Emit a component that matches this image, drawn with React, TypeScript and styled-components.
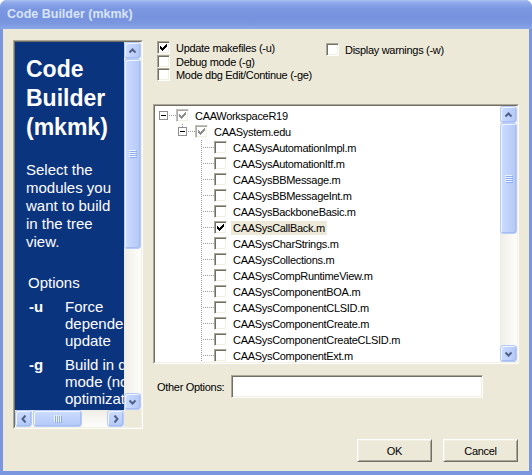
import React from "react";
import styled, { createGlobalStyle, css } from "styled-components";

const GlobalStyle = createGlobalStyle`
  html, body {
    margin: 0;
    padding: 0;
    background: #ffffff;
  }
  #root {
    width: 532px;
    height: 475px;
  }
`;

// classic 3d edges, XP colour scheme
const sunkenOuter = css`
  border: 1px solid;
  border-color: #aca899 #ffffff #ffffff #aca899;
`;

const sunkenInner = css`
  border: 1px solid;
  border-color: #716f64 #f1efe2 #f1efe2 #716f64;
`;

const Window = styled.div`
  width: 532px;
  height: 475px;
  display: flex;
  flex-direction: column;
  background: #7a96df;
  border-radius: 7px 7px 0 0;
  overflow: hidden;
`;

const TitleBar = styled.div`
  flex: none;
  height: 29px;
  box-sizing: border-box;
  display: flex;
  align-items: center;
  padding: 0 0 1px 7px;
  background: linear-gradient(
    180deg,
    #a9c0f2 0%,
    #8ea9ea 10%,
    #7c98e1 28%,
    #7793df 60%,
    #7b97e0 82%,
    #8ba7ea 100%
  );
  color: #d8e4f8;
  font: bold 12.5px "Liberation Sans", Arial, sans-serif;
`;

const Client = styled.div`
  flex: 1;
  margin: 0 3px 4px 3px;
  background: #ece9d8;
  display: grid;
  grid-template-columns: 130px 366px;
  grid-template-rows: 389px 23px;
  column-gap: 10px;
  row-gap: 10px;
  align-content: start;
  padding: 11px 0 0 10px;
  font-family: "Liberation Sans", Arial, sans-serif;
  font-size: 11px;
  letter-spacing: -0.3px;
  color: #000;
`;

/* ---------- scrollbars ---------- */

type Dir = "v" | "h";

const Track = styled.div<{ $dir: Dir }>`
  display: flex;
  flex-direction: ${(p) => (p.$dir === "v" ? "column" : "row")};
  min-width: 0;
  min-height: 0;
  background: linear-gradient(
    ${(p) => (p.$dir === "v" ? "90deg" : "180deg")},
    #eeede5 0%,
    #f5f4ef 40%,
    #fdfdfb 100%
  );
`;

const piece = css<{ $dir: Dir }>`
  box-sizing: border-box;
  border: 1px solid #b6cbf7;
  border-radius: 3px;
  background: linear-gradient(
    ${(p) => (p.$dir === "v" ? "90deg" : "180deg")},
    #cddcfe 0%,
    #bfd2fb 50%,
    #b3c9f7 100%
  );
  box-shadow: inset 1px 1px 0 #f1f5fe, inset -1px -1px 0 #a7bdf0;
  display: flex;
  align-items: center;
  justify-content: center;
`;

const ArrowButton = styled.div<{ $dir: Dir }>`
  ${piece};
  flex: none;
  width: 17px;
  height: 17px;
`;

const Thumb = styled.div<{ $dir: Dir; $size: number; $lead: number }>`
  ${piece};
  flex: none;
  ${(p) =>
    p.$dir === "v"
      ? `height: ${p.$size}px; margin-top: ${p.$lead}px;`
      : `width: ${p.$size}px; margin-left: ${p.$lead}px;`}
`;

const Spacer = styled.div`
  flex: 1;
`;

const arrowPaths: Record<string, string> = {
  up: "M1.5 5.5 L4.5 2.5 L7.5 5.5",
  down: "M1.5 2.5 L4.5 5.5 L7.5 2.5",
  left: "M5.5 0.5 L2.5 4 L5.5 7.5",
  right: "M2.5 0.5 L5.5 4 L2.5 7.5",
};

function Arrow({ to }: { to: "up" | "down" | "left" | "right" }) {
  const vertical = to === "up" || to === "down";
  return (
    <svg width={vertical ? 9 : 8} height={vertical ? 8 : 8} viewBox={vertical ? "0 0 9 8" : "0 0 8 8"}>
      <path d={arrowPaths[to]} fill="none" stroke="#4d6185" strokeWidth={2} />
    </svg>
  );
}

function Grip({ dir }: { dir: Dir }) {
  const bars = [0, 2, 4, 6];
  return (
    <svg width="8" height="8" shapeRendering="crispEdges">
      {bars.map((o) =>
        dir === "v" ? (
          <g key={o}>
            <rect x={0} y={o} width={7} height={1} fill="#eef4fe" />
            <rect x={1} y={o + 1} width={7} height={1} fill="#8cabf0" />
          </g>
        ) : (
          <g key={o}>
            <rect x={o} y={0} width={1} height={7} fill="#eef4fe" />
            <rect x={o + 1} y={1} width={1} height={7} fill="#8cabf0" />
          </g>
        )
      )}
    </svg>
  );
}

function ScrollBar({ dir, thumb, lead = 0 }: { dir: Dir; thumb: number; lead?: number }) {
  return (
    <Track $dir={dir}>
      <ArrowButton $dir={dir}>
        <Arrow to={dir === "v" ? "up" : "left"} />
      </ArrowButton>
      <Thumb $dir={dir} $size={thumb} $lead={lead}>
        <Grip dir={dir} />
      </Thumb>
      <Spacer />
      <ArrowButton $dir={dir}>
        <Arrow to={dir === "v" ? "down" : "right"} />
      </ArrowButton>
    </Track>
  );
}

/* ---------- help pane ---------- */

const HelpFrame = styled.div`
  ${sunkenOuter};
  grid-column: 1;
  grid-row: 1;
`;

const HelpWell = styled.div`
  ${sunkenInner};
  height: 100%;
  box-sizing: border-box;
  display: grid;
  grid-template-columns: 109px 17px;
  grid-template-rows: 368px 17px;
`;

const HelpContent = styled.div`
  min-width: 0;
  overflow: hidden;
  background: #0b347f;
  color: #ffffff;
  padding: 13px 0 0 11px;
  letter-spacing: normal;
  font-family: "Liberation Sans", Arial, sans-serif;
`;

const HelpTitle = styled.h1`
  margin: 0;
  font-size: 23px;
  line-height: 29px;
  font-weight: bold;
`;

const HelpText = styled.p`
  margin: 19px 0 0 0;
  padding-right: 4px;
  font-size: 15px;
  line-height: 18px;
`;

const HelpSection = styled.div`
  margin: 23px 0 0 2px;
  font-size: 15px;
  line-height: 18px;
`;

const FlagList = styled.div`
  display: grid;
  grid-template-columns: 36px 100px;
  row-gap: 7px;
  margin: 3px 0 0 3px;
  padding-top: 3px;
  font-size: 15px;
  line-height: 17px;
`;

const Flag = styled.div`
  font-weight: bold;
`;

const FlagDesc = styled.div``;

const Corner = styled.div`
  background: #ece9d8;
`;

/* ---------- checkboxes ---------- */

const Box = styled.span<{ $greyed?: boolean }>`
  flex: none;
  width: 13px;
  height: 13px;
  box-sizing: border-box;
  border: 1px solid;
  border-color: ${(p) => (p.$greyed ? "#c4c2b8 #ffffff #ffffff #c4c2b8" : "#aca899 #ffffff #ffffff #aca899")};
  box-shadow: ${(p) =>
    p.$greyed ? "inset 1px 1px 0 #a8a8a8, inset -1px -1px 0 #f1efe2" : "inset 1px 1px 0 #716f64, inset -1px -1px 0 #f1efe2"};
  background: #ffffff;
  display: flex;
  align-items: center;
  justify-content: center;
`;

const tick =
  "M6 0h1v1h-1z M5 1h2v1h-2z M0 2h1v1h-1z M4 2h3v1h-3z M0 3h2v1h-2z M3 3h3v1h-3z M0 4h5v1h-5z M1 5h3v1h-3z M2 6h1v1h-1z";

function CheckBox({ checked, greyed }: { checked?: boolean; greyed?: boolean }) {
  return (
    <Box $greyed={greyed}>
      {checked && (
        <svg width="7" height="7" shapeRendering="crispEdges">
          <path d={tick} fill={greyed ? "#8e8e8e" : "#000000"} />
        </svg>
      )}
    </Box>
  );
}

const OptionsBlock = styled.div`
  display: flex;
  margin-top: 1px;
  padding-left: 4px;
`;

const CheckColumn = styled.div<{ $width?: number; $drop?: number }>`
  display: flex;
  flex-direction: column;
  ${(p) => (p.$width ? `width: ${p.$width}px;` : "")}
  padding-top: ${(p) => p.$drop ?? 0}px;
`;

const CheckItem = styled.label`
  display: flex;
  align-items: center;
  height: 13px;
  gap: 6px;
  white-space: nowrap;

  &:first-child {
    margin-bottom: 1px;
  }
`;

/* ---------- tree ---------- */

const MainCol = styled.div`
  grid-column: 2;
  grid-row: 1;
  display: flex;
  flex-direction: column;
`;

const TreeFrame = styled.div`
  ${sunkenOuter};
  margin-top: 23px;
  height: 260px;
  box-sizing: border-box;
`;

const TreeWell = styled.div`
  ${sunkenInner};
  height: 100%;
  box-sizing: border-box;
  display: flex;
  background: #ffffff;
`;

const TreeBody = styled.div`
  flex: 1;
  min-width: 0;
  overflow: hidden;
  padding-top: 2px;
`;

const TreeScroll = styled.div`
  flex: none;
  width: 17px;
  display: flex;

  & > div {
    flex: 1;
  }
`;

const TreeRow = styled.div<{ $level: number }>`
  display: flex;
  align-items: flex-start;
  height: 16px;
  padding-left: ${(p) => 3 + p.$level * 19}px;

  & > ${Box} {
    margin-top: 1px;
  }
`;

const TreeLabel = styled.span<{ $selected?: boolean }>`
  margin: 1px 0 0 4px;
  padding: 0 2px;
  line-height: 14px;
  white-space: nowrap;
  background: ${(p) => (p.$selected ? "#ece9d8" : "transparent")};
`;

type BranchKind = "root" | "open" | "leaf";

function Branch({ kind }: { kind: BranchKind }) {
  const line = { stroke: "#9a9a9a", strokeDasharray: "1 1", strokeWidth: 1 };
  return (
    <svg width="18" height="16" shapeRendering="crispEdges" style={{ flex: "none" }}>
      {kind === "leaf" ? (
        <>
          <line x1={5.5} y1={0} x2={5.5} y2={16} {...line} />
          <line x1={7} y1={7.5} x2={18} y2={7.5} {...line} />
        </>
      ) : (
        <>
          {kind === "open" && <line x1={5.5} y1={0} x2={5.5} y2={3} {...line} />}
          <rect x={1.5} y={3.5} width={8} height={8} fill="#ffffff" stroke="#8e8e8e" />
          <line x1={3} y1={7.5} x2={8} y2={7.5} stroke="#000000" />
          <line x1={11} y1={7.5} x2={18} y2={7.5} {...line} />
        </>
      )}
    </svg>
  );
}

const modules = [
  "CAASysAutomationImpl.m",
  "CAASysAutomationItf.m",
  "CAASysBBMessage.m",
  "CAASysBBMessageInt.m",
  "CAASysBackboneBasic.m",
  "CAASysCallBack.m",
  "CAASysCharStrings.m",
  "CAASysCollections.m",
  "CAASysCompRuntimeView.m",
  "CAASysComponentBOA.m",
  "CAASysComponentCLSID.m",
  "CAASysComponentCreate.m",
  "CAASysComponentCreateCLSID.m",
  "CAASysComponentExt.m",
  "CAASysComponentItf.m",
  "CAASysDataExtension.m",
];

const selectedModule = "CAASysCallBack.m";

/* ---------- bottom ---------- */

const OtherRow = styled.div`
  display: flex;
  align-items: center;
  margin-top: 11px;
`;

const OtherLabel = styled.span`
  width: 74px;
  padding-left: 4px;
  white-space: nowrap;
`;

const TextField = styled.div`
  width: 252px;
  height: 23px;
  box-sizing: border-box;
  ${sunkenOuter};
  box-shadow: inset 1px 1px 0 #716f64, inset -1px -1px 0 #f1efe2;
  background: #ffffff;
`;

const ButtonRow = styled.div`
  grid-column: 2;
  grid-row: 2;
  display: flex;
  justify-content: flex-end;
  gap: 11px;
  padding-right: 1px;
`;

const PushButton = styled.div`
  width: 75px;
  height: 23px;
  box-sizing: border-box;
  display: flex;
  align-items: center;
  justify-content: center;
  border: 1px solid;
  border-color: #ffffff #716f64 #716f64 #ffffff;
  box-shadow: inset 1px 1px 0 #f1efe2, inset -1px -1px 0 #aca899;
  background: #ece9d8;
`;

export default function App() {
  return (
    <>
      <GlobalStyle />
      <Window>
        <TitleBar>Code Builder (mkmk)</TitleBar>
        <Client>
          <HelpFrame>
            <HelpWell>
              <HelpContent>
                <HelpTitle>Code Builder (mkmk)</HelpTitle>
                <HelpText>Select the modules you want to build in the tree view.</HelpText>
                <HelpSection>Options</HelpSection>
                <FlagList>
                  <Flag>-u</Flag>
                  <FlagDesc>Force dependency update</FlagDesc>
                  <Flag>-g</Flag>
                  <FlagDesc>Build in debug mode (no optimization)</FlagDesc>
                  <Flag>-ge</Flag>
                  <FlagDesc>Build for Edit and Continue</FlagDesc>
                  <Flag>-w</Flag>
                  <FlagDesc>Display warnings</FlagDesc>
                </FlagList>
              </HelpContent>
              <ScrollBar dir="v" thumb={190} />
              <ScrollBar dir="h" thumb={49} lead={1} />
              <Corner />
            </HelpWell>
          </HelpFrame>

          <MainCol>
            <OptionsBlock>
              <CheckColumn $width={169}>
                <CheckItem>
                  <CheckBox checked />
                  Update makefiles (-u)
                </CheckItem>
                <CheckItem>
                  <CheckBox />
                  Debug mode (-g)
                </CheckItem>
                <CheckItem>
                  <CheckBox />
                  Mode dbg Edit/Continue (-ge)
                </CheckItem>
              </CheckColumn>
              <CheckColumn $drop={2}>
                <CheckItem>
                  <CheckBox />
                  Display warnings (-w)
                </CheckItem>
              </CheckColumn>
            </OptionsBlock>

            <TreeFrame>
              <TreeWell>
                <TreeBody>
                  <TreeRow $level={0}>
                    <Branch kind="root" />
                    <CheckBox checked greyed />
                    <TreeLabel>CAAWorkspaceR19</TreeLabel>
                  </TreeRow>
                  <TreeRow $level={1}>
                    <Branch kind="open" />
                    <CheckBox checked greyed />
                    <TreeLabel>CAASystem.edu</TreeLabel>
                  </TreeRow>
                  {modules.map((m) => (
                    <TreeRow $level={2} key={m}>
                      <Branch kind="leaf" />
                      <CheckBox checked={m === selectedModule} />
                      <TreeLabel $selected={m === selectedModule}>{m}</TreeLabel>
                    </TreeRow>
                  ))}
                </TreeBody>
                <TreeScroll>
                  <ScrollBar dir="v" thumb={111} />
                </TreeScroll>
              </TreeWell>
            </TreeFrame>

            <OtherRow>
              <OtherLabel>Other Options:</OtherLabel>
              <TextField />
            </OtherRow>
          </MainCol>

          <ButtonRow>
            <PushButton>OK</PushButton>
            <PushButton>Cancel</PushButton>
          </ButtonRow>
        </Client>
      </Window>
    </>
  );
}
